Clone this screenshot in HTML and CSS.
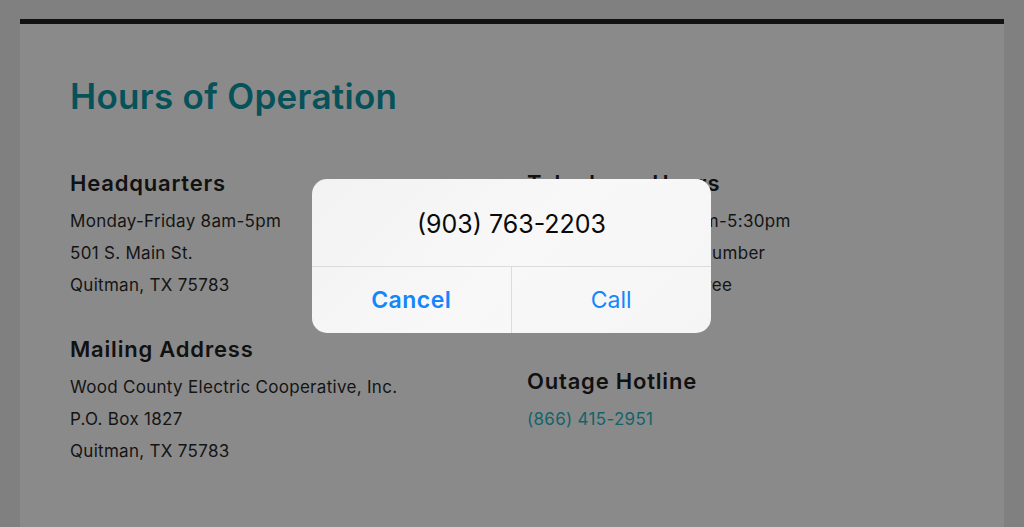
FILE: index.html
```html
<!DOCTYPE html>
<html lang="en">
<head>
<meta charset="utf-8">
<title>Hours of Operation</title>
<link rel="stylesheet" href="styles.css">
</head>
<body>
<main class="card">
  <h1 class="title">Hours of Operation</h1>
  <div class="columns">
    <div class="col">
      <section class="block">
        <h3 class="block-title">Headquarters</h3>
        <p class="line">Monday-Friday 8am-5pm</p>
        <p class="line">501 S. Main St.</p>
        <p class="line">Quitman, TX 75783</p>
      </section>
      <section class="block">
        <h3 class="block-title">Mailing Address</h3>
        <p class="line">Wood County Electric Cooperative, Inc.</p>
        <p class="line">P.O. Box 1827</p>
        <p class="line">Quitman, TX 75783</p>
      </section>
    </div>
    <div class="col">
      <section class="block">
        <h3 class="block-title">Telephone Hours</h3>
        <p class="line">Monday-Friday 7:30am-5:30pm</p>
        <p class="line">Call the same phone number</p>
        <p class="line">or call our office toll free</p>
        <p class="line"><a class="link" href="#">(903) 763-2203</a></p>
      </section>
      <section class="block">
        <h3 class="block-title">Outage Hotline</h3>
        <p class="line"><a class="link" href="#">(866) 415-2951</a></p>
      </section>
    </div>
  </div>
</main>

<div class="alert" role="dialog">
  <div class="alert-msg">(903) 763-2203</div>
  <div class="alert-actions">
    <button class="alert-btn alert-btn-cancel">Cancel</button>
    <button class="alert-btn">Call</button>
  </div>
</div>
</body>
</html>
```

FILE: styles.css
```css
html, body {
  margin: 0;
  padding: 0;
}
body {
  background: #808080;
  font-family: "Inter", "Noto Sans", "Liberation Sans", sans-serif;
  color: #121212;
  height: 527px;
  overflow: hidden;
}
.card {
  margin: 19px 20px 0;
  border-top: 5px solid #121212;
  background: #8a8a8a;
  padding: 50px 50px 0;
  height: 600px;
  box-sizing: border-box;
}
.title {
  margin: 0 0 49px;
  font-size: 35px;
  line-height: 44px;
  font-weight: 600;
  color: #075159;
  letter-spacing: 0.3px;
}
.columns {
  display: grid;
  grid-template-columns: 1fr 1fr;
  column-gap: 30px;
}
.block {
  margin-bottom: 32px;
}
.block-title {
  margin: 0 0 6px;
  font-size: 22px;
  line-height: 32px;
  font-weight: 600;
  color: #111;
  letter-spacing: 0.8px;
}
.line {
  margin: 0;
  font-size: 17px;
  line-height: 32px;
  color: #141414;
  letter-spacing: 0.3px;
}
.link {
  color: #14636a;
  text-decoration: none;
}
.alert {
  position: absolute;
  top: 179px;
  left: 312px;
  width: 399px;
  height: 154px;
  border-radius: 15px;
  background: linear-gradient(135deg, #f2f2f2 0%, #f8f8f8 50%, #f5f5f5 100%);
  display: flex;
  flex-direction: column;
  overflow: hidden;
  font-family: "Inter", "Liberation Sans", sans-serif;
}
.alert-msg {
  height: 88px;
  display: flex;
  align-items: center;
  justify-content: center;
  font-size: 25px;
  color: #0a0a0a;
  border-bottom: 1px solid #dcdcdc;
  box-sizing: border-box;
  padding-top: 2px;
}
.alert-actions {
  flex: 1;
  display: grid;
  grid-template-columns: 1fr 1fr;
}
.alert-btn {
  border: 0;
  background: transparent;
  font-family: inherit;
  font-size: 23px;
  color: #1286fb;
  padding: 0;
  margin: 0;
}
.alert-btn-cancel {
  font-weight: 600;
  letter-spacing: 0.5px;
  border-right: 1px solid #dcdcdc;
}
```
